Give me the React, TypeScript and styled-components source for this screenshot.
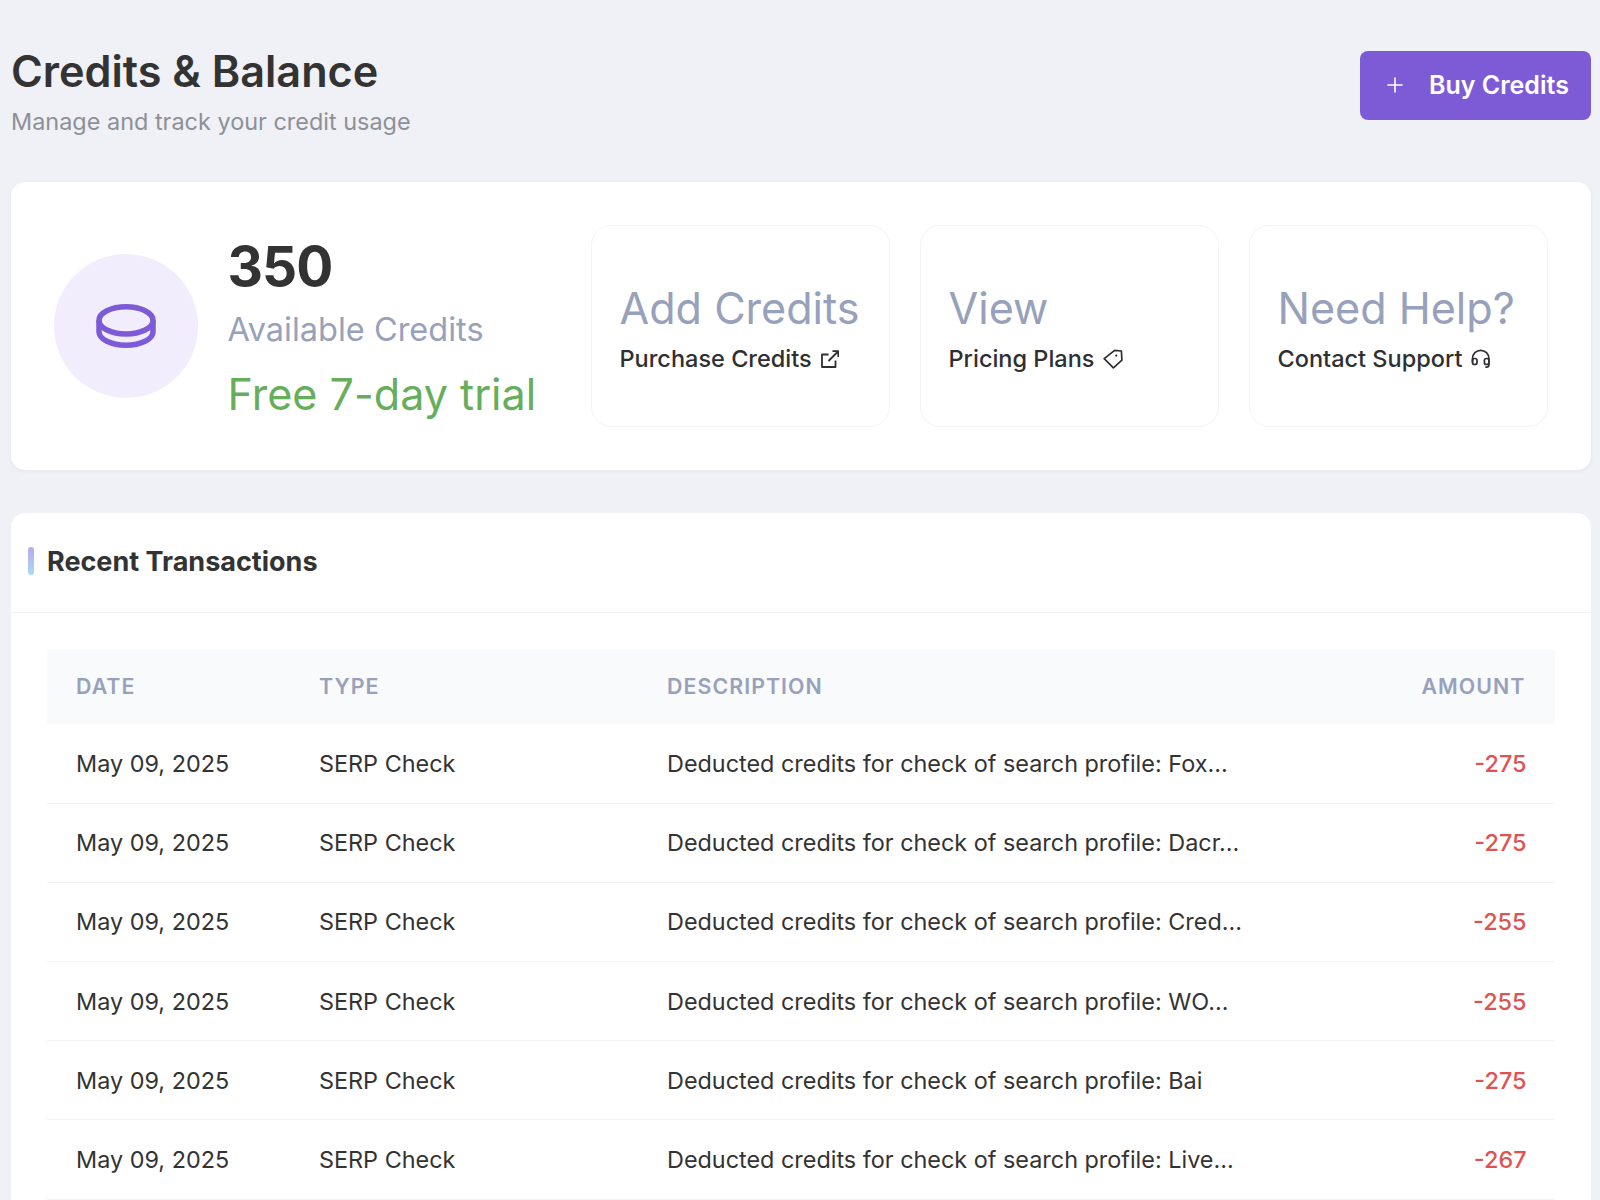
import React from "react";
import styled, { createGlobalStyle } from "styled-components";
import { Plus } from "lucide-react";

const Global = createGlobalStyle`
  html, body { margin: 0; padding: 0; height: 1200px; overflow: hidden; background: #f0f1f6; }
  body { font-family: Inter, "Liberation Sans", sans-serif; color: #333; }
  * { box-sizing: border-box; }
`;

const Page = styled.div`
  padding: 51px 9px 0 11px;
  display: flex;
  flex-direction: column;
  gap: 43px;
`;

const Header = styled.header`
  display: flex;
  justify-content: space-between;
  align-items: flex-start;
  height: 88px;
`;

const Titles = styled.div`
  display: flex;
  flex-direction: column;
  gap: 12px;
`;

const Title = styled.h1`
  margin: -1px 0 0;
  font-size: 43.2px;
  line-height: 42px;
  font-weight: 600;
  color: #333;
`;

const Subtitle = styled.p`
  margin: 0;
  font-size: 23.45px;
  line-height: 36px;
  color: #8e9097;
`;

const BuyButton = styled.button`
  width: 231px;
  height: 69px;
  display: flex;
  align-items: center;
  gap: 22px;
  padding: 0 0 2px 23px;
  border: 0;
  border-radius: 8px;
  background: #7e5bd6;
  color: #fff;
  font: 600 25px Inter, sans-serif;
`;

const BalanceCard = styled.section`
  display: flex;
  align-items: center;
  justify-content: space-between;
  height: 288px;
  padding: 43px;
  background: #fff;
  border-radius: 14px;
  box-shadow: 0 1px 4px rgba(30, 40, 80, 0.06);
`;

const Balance = styled.div`
  display: flex;
  align-items: center;
  gap: 29.5px;
`;

const CoinBadge = styled.div`
  width: 144px;
  height: 144px;
  border-radius: 50%;
  background: #f1edfc;
  display: flex;
  align-items: center;
  justify-content: center;
`;

const BalanceText = styled.div`
  display: flex;
  flex-direction: column;
  padding-top: 6px;
`;

const Amount = styled.div`
  font-size: 55px;
  line-height: 66px;
  font-weight: 700;
  letter-spacing: -1px;
  color: #333;
  margin-bottom: 9px;
`;

const AmountLabel = styled.div`
  font-size: 32.5px;
  line-height: 44px;
  color: #98a1bb;
  margin-bottom: 11px;
`;

const Trial = styled.div`
  font-size: 43.1px;
  line-height: 62px;
  color: #66ad5c;
`;

const Actions = styled.div`
  display: flex;
  gap: 29.5px;
`;

const ActionCard = styled.a`
  width: 299.5px;
  height: 202px;
  padding: 2px 28px 0;
  display: flex;
  flex-direction: column;
  justify-content: center;
  border: 1px solid #f3f4f7;
  border-radius: 20px;
`;

const ActionTitle = styled.div`
  font-size: 43.1px;
  line-height: 63px;
  white-space: nowrap;
  color: #98a1bb;
`;

const ActionLink = styled.div`
  display: flex;
  align-items: center;
  gap: 9px;
  font-size: 23.5px;
  line-height: 37px;
  font-weight: 500;
  color: #2f2f33;
`;

const Transactions = styled.section`
  background: #fff;
  border-radius: 14px;
  padding-bottom: 36px;
`;

const SectionHead = styled.div`
  height: 100px;
  padding: 0 0 3px 17px;
  display: flex;
  align-items: center;
  gap: 13px;
  border-bottom: 1px solid #f1f2f5;
`;

const Accent = styled.span`
  width: 6px;
  height: 28px;
  border-radius: 3px;
  background: linear-gradient(180deg, #b9a9ee, #a8dcf6);
`;

const SectionTitle = styled.h2`
  margin: 0;
  font-size: 27px;
  font-weight: 700;
  color: #333;
`;

const TableWrap = styled.div`
  padding: 36px 36px 0;
`;

const Table = styled.table`
  width: 100%;
  border-collapse: collapse;
  table-layout: fixed;
`;

const HeadRow = styled.tr`
  height: 75px;
  background: #f9fafc;
`;

const Th = styled.th<{ $w?: number; $right?: boolean }>`
  width: ${(p) => (p.$w ? `${p.$w}px` : "auto")};
  padding: 0 29.5px 1px 29px;
  text-align: ${(p) => (p.$right ? "right" : "left")};
  font-size: 21.35px;
  font-weight: 600;
  letter-spacing: 1.06px;
  color: #98a1bb;
`;

const Row = styled.tr`
  height: 79.2px;
  border-bottom: 1px solid #f1f2f5;
`;

const Td = styled.td`
  padding: 0 28.5px 0 29px;
  font-size: 23.4px;
  color: #333;
  white-space: nowrap;
`;

const AmountCell = styled(Td)`
  text-align: right;
  font-weight: 500;
  color: #e05252;
`;

const rows = [
  ["Fox...", "-275"],
  ["Dacr...", "-275"],
  ["Cred...", "-255"],
  ["WO...", "-255"],
  ["Bai", "-275"],
  ["Live...", "-267"],
];

const CoinIcon = () => (
  <svg width="60" height="44" viewBox="0 0 60 44" fill="none" stroke="#7e5bd6" strokeWidth="5.5">
    <ellipse cx="30" cy="16.4" rx="27" ry="13.6" />
    <path d="M3 16.5v11.25C3 35.2 15 41.25 30 41.25s27-6.05 27-13.5V16.5" />
  </svg>
);

const ExternalIcon = () => (
  <svg width="18" height="18" viewBox="2 0 18 18" fill="none" stroke="#2f2f33" strokeWidth="1.8" strokeLinejoin="round">
    <path d="M9.5 4.5H3V17h13.5v-6.5" />
    <path d="M9.5 11 19 1.5M13.5 1.2h5.8V7" />
  </svg>
);

const TagIcon = () => (
  <svg width="20" height="20" viewBox="0 0 20 20" fill="none" stroke="#2f2f33" strokeWidth="1.7" strokeLinejoin="round">
    <path d="M1.2 9.6 11.6 1.4l6.8.6.5 9.2-8.5 7.6z" />
    <circle cx="13.2" cy="6.6" r="1.1" fill="#2f2f33" stroke="none" />
  </svg>
);

const HeadsetIcon = () => (
  <svg width="20" height="20" viewBox="0 0 20 20" fill="none" stroke="#2f2f33" strokeWidth="1.7" strokeLinecap="round" strokeLinejoin="round">
    <path d="M1.5 13V9.5a8.2 8.2 0 0 1 16.4 0V13" />
    <rect x="1.5" y="9.5" width="4.5" height="6" rx="2" />
    <rect x="13.4" y="9.5" width="4.5" height="6" rx="2" />
    <path d="M17.9 14.5v1.2a2.4 2.4 0 0 1-2.4 2.4H15" />
  </svg>
);

export default function App() {
  return (
    <>
      <Global />
      <Page>
        <Header>
          <Titles>
            <Title>Credits &amp; Balance</Title>
            <Subtitle>Manage and track your credit usage</Subtitle>
          </Titles>
          <BuyButton>
            <Plus size={24} strokeWidth={1.6} />
            Buy Credits
          </BuyButton>
        </Header>
        <BalanceCard>
          <Balance>
            <CoinBadge>
              <CoinIcon />
            </CoinBadge>
            <BalanceText>
              <Amount>350</Amount>
              <AmountLabel>Available Credits</AmountLabel>
              <Trial>Free 7-day trial</Trial>
            </BalanceText>
          </Balance>
          <Actions>
            <ActionCard>
              <ActionTitle>Add Credits</ActionTitle>
              <ActionLink>
                Purchase Credits <ExternalIcon />
              </ActionLink>
            </ActionCard>
            <ActionCard>
              <ActionTitle>View</ActionTitle>
              <ActionLink>
                Pricing Plans <TagIcon />
              </ActionLink>
            </ActionCard>
            <ActionCard>
              <ActionTitle>Need Help?</ActionTitle>
              <ActionLink>
                Contact Support <HeadsetIcon />
              </ActionLink>
            </ActionCard>
          </Actions>
        </BalanceCard>
        <Transactions>
          <SectionHead>
            <Accent />
            <SectionTitle>Recent Transactions</SectionTitle>
          </SectionHead>
          <TableWrap>
            <Table>
              <thead>
                <HeadRow>
                  <Th $w={243}>DATE</Th>
                  <Th $w={348}>TYPE</Th>
                  <Th>DESCRIPTION</Th>
                  <Th $w={200} $right>AMOUNT</Th>
                </HeadRow>
              </thead>
              <tbody>
                {rows.map(([name, amount], i) => (
                  <Row key={i}>
                    <Td>May 09, 2025</Td>
                    <Td>SERP Check</Td>
                    <Td>Deducted credits for check of search profile: {name}</Td>
                    <AmountCell>{amount}</AmountCell>
                  </Row>
                ))}
              </tbody>
            </Table>
          </TableWrap>
        </Transactions>
      </Page>
    </>
  );
}
